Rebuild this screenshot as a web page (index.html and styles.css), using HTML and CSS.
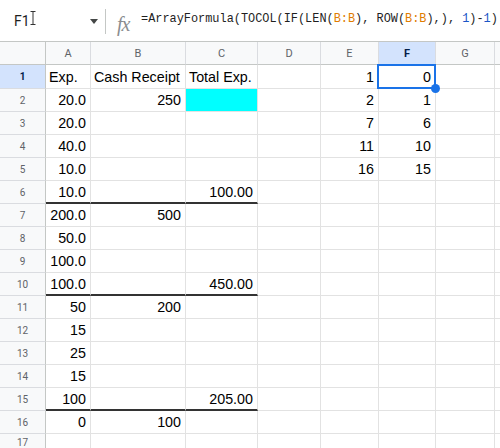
FILE: index.html
```html
<!DOCTYPE html>
<html>
<head>
<meta charset="utf-8">
<link rel="stylesheet" href="styles.css">
</head>
<body>
<div class="app">
  <div class="fbar">
    <div class="namebox">
      <span class="ref">F1</span>
      <svg class="ibeam" width="6" height="14" viewBox="0 0 6 14"><path d="M0.5 0.5h2.5M3 0.5h2.5M3 0.5v13M0.5 13.5h2.5M3 13.5h2.5" stroke="#333" stroke-width="1" fill="none"/></svg>
      <svg class="caret" width="8" height="5" viewBox="0 0 8 5"><path d="M0 0h8L4 5z" fill="#444746"/></svg>
    </div>
    <div class="sep"></div>
    <div class="fx">fx</div>
    <div class="formula">=ArrayFormula(TOCOL(IF(LEN(<span class="rg">B:B</span>), ROW(<span class="rg">B:B</span>),), <span class="num">1</span>)-<span class="num">1</span>)</div>
  </div>
  <div class="sheet">
    <div class="corner"></div>
    <div class="ch">A</div><div class="ch">B</div><div class="ch">C</div><div class="ch">D</div><div class="ch">E</div><div class="ch selh">F</div><div class="ch">G</div><div class="ch"></div>

    <div class="rh selh">1</div>
    <div class="c">Exp.</div><div class="c">Cash Receipt</div><div class="c">Total Exp.</div><div class="c"></div><div class="c n">1</div><div class="c n active">0</div><div class="c"></div><div class="c"></div>

    <div class="rh">2</div>
    <div class="c n">20.0</div><div class="c n">250</div><div class="c cyan"></div><div class="c"></div><div class="c n">2</div><div class="c n">1</div><div class="c"></div><div class="c"></div>

    <div class="rh">3</div>
    <div class="c n">20.0</div><div class="c"></div><div class="c"></div><div class="c"></div><div class="c n">7</div><div class="c n">6</div><div class="c"></div><div class="c"></div>

    <div class="rh">4</div>
    <div class="c n">40.0</div><div class="c"></div><div class="c"></div><div class="c"></div><div class="c n">11</div><div class="c n">10</div><div class="c"></div><div class="c"></div>

    <div class="rh">5</div>
    <div class="c n">10.0</div><div class="c"></div><div class="c"></div><div class="c"></div><div class="c n">16</div><div class="c n">15</div><div class="c"></div><div class="c"></div>

    <div class="rh">6</div>
    <div class="c n thick">10.0</div><div class="c thick"></div><div class="c n thick">100.00</div><div class="c"></div><div class="c"></div><div class="c"></div><div class="c"></div><div class="c"></div>

    <div class="rh">7</div>
    <div class="c n">200.0</div><div class="c n">500</div><div class="c"></div><div class="c"></div><div class="c"></div><div class="c"></div><div class="c"></div><div class="c"></div>

    <div class="rh">8</div>
    <div class="c n">50.0</div><div class="c"></div><div class="c"></div><div class="c"></div><div class="c"></div><div class="c"></div><div class="c"></div><div class="c"></div>

    <div class="rh">9</div>
    <div class="c n">100.0</div><div class="c"></div><div class="c"></div><div class="c"></div><div class="c"></div><div class="c"></div><div class="c"></div><div class="c"></div>

    <div class="rh">10</div>
    <div class="c n thick">100.0</div><div class="c thick"></div><div class="c n thick">450.00</div><div class="c"></div><div class="c"></div><div class="c"></div><div class="c"></div><div class="c"></div>

    <div class="rh">11</div>
    <div class="c n">50</div><div class="c n">200</div><div class="c"></div><div class="c"></div><div class="c"></div><div class="c"></div><div class="c"></div><div class="c"></div>

    <div class="rh">12</div>
    <div class="c n">15</div><div class="c"></div><div class="c"></div><div class="c"></div><div class="c"></div><div class="c"></div><div class="c"></div><div class="c"></div>

    <div class="rh">13</div>
    <div class="c n">25</div><div class="c"></div><div class="c"></div><div class="c"></div><div class="c"></div><div class="c"></div><div class="c"></div><div class="c"></div>

    <div class="rh">14</div>
    <div class="c n">15</div><div class="c"></div><div class="c"></div><div class="c"></div><div class="c"></div><div class="c"></div><div class="c"></div><div class="c"></div>

    <div class="rh">15</div>
    <div class="c n thick">100</div><div class="c thick"></div><div class="c n thick">205.00</div><div class="c"></div><div class="c"></div><div class="c"></div><div class="c"></div><div class="c"></div>

    <div class="rh">16</div>
    <div class="c n">0</div><div class="c n">100</div><div class="c"></div><div class="c"></div><div class="c"></div><div class="c"></div><div class="c"></div><div class="c"></div>

    <div class="rh last">17</div>
    <div class="c"></div><div class="c"></div><div class="c"></div><div class="c"></div><div class="c"></div><div class="c"></div><div class="c"></div><div class="c"></div>
  </div>
</div>
</body>
</html>
```
FILE: styles.css
```css
* { box-sizing: border-box; }
html, body { margin: 0; padding: 0; background: #fff; }
body { width: 500px; height: 448px; overflow: hidden; font-family: "Liberation Sans", Arial, sans-serif; }

.app { width: 500px; height: 448px; overflow: hidden; display: flex; flex-direction: column; }

.fbar {
  height: 42px;
  flex: none;
  display: flex;
  align-items: center;
  border-bottom: 1px solid #c4c7c5;
  background: #fff;
}
.namebox {
  width: 105px;
  display: flex;
  align-items: center;
  padding-left: 14px;
  height: 100%;
}
.ref { font-size: 14px; color: #1f1f1f; font-family: "Roboto", "Liberation Sans", sans-serif; }
.ibeam { margin-top: -6px; }
.caret { margin-left: 54px; margin-top: 1px; }
.sep { width: 1px; height: 25px; background: #c4c7c5; margin-top: 2px; }
.fx {
  width: 35px;
  padding-left: 11px;
  font-family: "Liberation Serif", serif;
  font-style: italic;
  font-size: 20px;
  color: #8a8d90;
  margin-top: 7px;
  letter-spacing: -1px;
}
.formula {
  font-family: "Liberation Mono", "DejaVu Sans Mono", monospace;
  font-size: 11.9px;
  color: #1f1f1f;
  white-space: nowrap;
  margin-top: -3px;
}
.rg { color: #e07c00; }
.num { color: #1a56c7; }

.sheet {
  display: grid;
  grid-template-columns: 46px 45px 95px 72px 63px 58px 57px 59px 1fr;
  grid-template-rows: 23px 24px repeat(16, 23px);
  flex: none;
}
.corner {
  background: #f8f9fa;
  border-right: 1px solid #c4c7c5;
  border-bottom: 1px solid #c4c7c5;
}
.ch {
  background: #f8f9fa;
  border-right: 1px solid #dadce0;
  border-bottom: 1px solid #c4c7c5;
  font-family: "Roboto", "Liberation Sans", sans-serif;
  font-size: 11px;
  color: #5f6368;
  display: flex;
  align-items: center;
  justify-content: center;
  padding-top: 1px;
}
.rh {
  background: #f8f9fa;
  border-right: 1px solid #c4c7c5;
  border-bottom: 1px solid #dadce0;
  font-family: "Roboto", "Liberation Sans", sans-serif;
  font-size: 10px;
  color: #5f6368;
  display: flex;
  align-items: center;
  justify-content: center;
}
.rh.last { align-items: flex-start; padding-top: 3px; }
.selh {
  background: #d3e3fd;
  color: #041e49;
  font-weight: bold;
}
.c {
  border-right: 1px solid #e2e2e2;
  border-bottom: 1px solid #e2e2e2;
  font-size: 14.3px;
  color: #000;
  padding: 0 3px;
  display: flex;
  align-items: center;
  white-space: nowrap;
  overflow: visible;
  position: relative;
}
.n { justify-content: flex-end; padding-right: 4px; }
.thick { border-bottom: 2px solid #333; }
.cyan { background: #00ffff; }
.active::after {
  content: "";
  position: absolute;
  left: -2px;
  top: -1px;
  right: -1px;
  bottom: -1px;
  border: 2px solid #1a73e8;
}
.active::before {
  content: "";
  position: absolute;
  right: -5px;
  bottom: -5px;
  width: 9px;
  height: 9px;
  border-radius: 50%;
  background: #1a73e8;
  z-index: 2;
}
```
